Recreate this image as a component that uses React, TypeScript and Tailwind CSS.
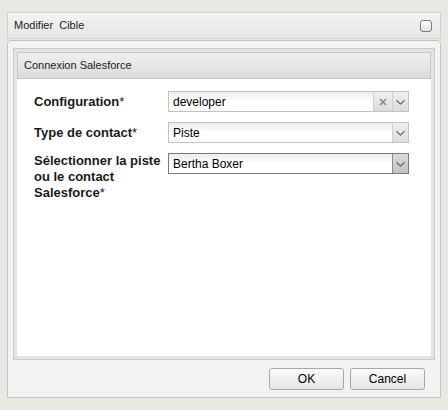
import React from "react"

function Chevron() {
    return (
        <svg width="9" height="6" viewBox="0 0 9 6">
            <path d="M0.5 0.5 L4.5 4.5 L8.5 0.5 L8.5 2 L4.5 5.8 L0.5 2 Z" fill="#4d4d4d" />
        </svg>
    )
}

function Cross() {
    return (
        <svg width="8" height="8" viewBox="0 0 8 8">
            <path d="M1 1 L7 7 M7 1 L1 7" stroke="#8a8a8a" strokeWidth="1.6" />
        </svg>
    )
}

function Combo({ value, clear, dark }: { value: string; clear?: boolean; dark?: boolean }) {
    return (
        <div
            className={
                "flex h-[21px] w-[241px] border bg-gradient-to-b from-[#ececec] via-white to-white " +
                (dark ? "border-[#7a7a7a]" : "border-[#c2c2c2]")
            }
        >
            <div className="flex flex-1 items-center pl-[4px] text-[12px] text-black">{value}</div>
            {clear && (
                <div className="flex w-[19px] items-center justify-center border-l border-[#cfcfcf] bg-gradient-to-b from-[#efefef] to-[#dcdcdc]">
                    <Cross />
                </div>
            )}
            <div
                className={
                    "flex w-[16px] items-center justify-center border-l " +
                    (dark
                        ? "border-[#8a8a8a] bg-gradient-to-b from-[#d9d9d9] to-[#c4c4c4]"
                        : "border-[#cfcfcf] bg-gradient-to-b from-[#efefef] to-[#dcdcdc]")
                }
            >
                <Chevron />
            </div>
        </div>
    )
}

function Label({ lines }: { lines: string[] }) {
    return (
        <div className="w-[134px] shrink-0 text-[13px] font-bold leading-[16px] text-[#1a1a1a]">
            {lines.map((l, i) => (
                <div key={i}>
                    {l}
                    {i === lines.length - 1 && <span className="font-normal">*</span>}
                </div>
            ))}
        </div>
    )
}

function Button({ children }: { children: React.ReactNode }) {
    return (
        <button className="h-[22px] w-[75px] rounded-[3px] border border-[#a8a8a8] bg-gradient-to-b from-[#fbfbfb] to-[#e6e6e6] text-[12px] text-black">
            {children}
        </button>
    )
}

export default function App() {
    return (
        <div
            className="flex h-[410px] w-[448px] flex-col bg-[#e9e8e2] px-[7px] pt-[12px]"
            style={{ fontFamily: '"Liberation Sans", Arial, sans-serif' }}
        >
            <div className="flex h-[27px] items-center justify-between border border-[#d2d2d2] bg-gradient-to-b from-[#f3f3f3] to-[#e6e6e6] pl-[6px] pr-[8px]">
                <span className="text-[11px] text-[#222]">Modifier&nbsp; Cible</span>
                <div className="h-[12px] w-[12px] rounded-[3px] border border-[#7d7d7d] bg-gradient-to-b from-white to-[#e0e0e0]" />
            </div>

            <div className="mt-[1px] flex h-[358px] flex-col rounded-t-[4px] border border-[#c4c4c4] bg-[#f2f2f2] px-[5px] pt-[7px]">
                <div className="flex h-[312px] flex-col border border-[#cacaca] bg-[#e4e4e4] p-[3px]">
                    <div className="flex h-[27px] items-center border border-[#c6c6c6] bg-gradient-to-b from-[#efefef] to-[#dcdcdc] pl-[6px] text-[11px] text-[#222]">
                        Connexion Salesforce
                    </div>
                    <div className="flex flex-1 flex-col gap-[10px] bg-white pl-[17px] pt-[12px]">
                        <div className="flex items-center">
                            <Label lines={["Configuration"]} />
                            <Combo value="developer" clear />
                        </div>
                        <div className="flex items-center">
                            <Label lines={["Type de contact"]} />
                            <Combo value="Piste" />
                        </div>
                        <div className="flex items-start">
                            <Label lines={["Sélectionner la piste", "ou le contact", "Salesforce"]} />
                            <Combo value="Bertha Boxer" dark />
                        </div>
                    </div>
                </div>
                <div className="mt-[8px] flex justify-end gap-[6px] pr-[10px]">
                    <Button>OK</Button>
                    <Button>Cancel</Button>
                </div>
            </div>
        </div>
    )
}
